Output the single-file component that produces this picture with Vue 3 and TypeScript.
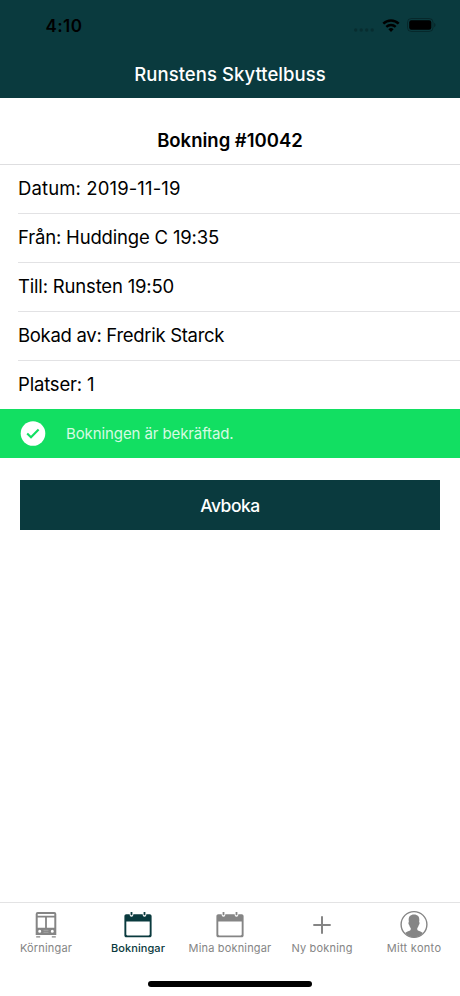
<script setup lang="ts">
interface Tab {
  id: string
  label: string
  icon: 'bus' | 'calendar' | 'plus' | 'person'
}

const details: { id: string; text: string }[] = [
  { id: 'date', text: 'Datum: 2019-11-19' },
  { id: 'from', text: 'Från: Huddinge C 19:35' },
  { id: 'to', text: 'Till: Runsten 19:50' },
  { id: 'by', text: 'Bokad av: Fredrik Starck' },
  { id: 'seats', text: 'Platser: 1' },
]

const tabs: Tab[] = [
  { id: 'runs', label: 'Körningar', icon: 'bus' },
  { id: 'bookings', label: 'Bokningar', icon: 'calendar' },
  { id: 'mine', label: 'Mina bokningar', icon: 'calendar' },
  { id: 'new', label: 'Ny bokning', icon: 'plus' },
  { id: 'account', label: 'Mitt konto', icon: 'person' },
]

const activeTab = 'bookings'
</script>

<template>
  <div class="screen">
    <header class="header">
      <div class="status">
        <span class="time">4:10</span>
        <div class="indicators">
          <svg class="dots" width="21" height="4" viewBox="0 0 21 4">
            <circle v-for="n in 4" :key="n" :cx="n * 5.5 - 3.8" cy="2" r="1.7" />
          </svg>
          <svg width="18" height="13" viewBox="0 0 18 13">
            <path d="M1.3 4.7a11 11 0 0 1 15.400 0" fill="none" stroke="#000" stroke-width="2.5" />
            <path d="M4.3 7.9a6.8 6.8 0 0 1 9.400 0" fill="none" stroke="#000" stroke-width="2.3" />
            <path d="M6.4 10.2a3.9 3.9 0 0 1 5.200 0L9 12.9z" />
          </svg>
          <svg width="29" height="14" viewBox="0 0 29 14">
            <rect x=".5" y=".5" width="25.5" height="13" rx="3.8" fill="none" stroke="#000" stroke-opacity=".3" />
            <rect x="2.2" y="2.2" width="22.1" height="9.6" rx="2.2" />
            <path d="M27.2 4.8c1.8.8 1.8 3.600 0 4.400z" opacity=".35" />
          </svg>
        </div>
      </div>
      <div class="nav-title"><span>Runstens Skyttelbuss</span></div>
    </header>

    <main class="content">
      <h1 class="title"><span>Bokning #10042</span></h1>
      <ul class="details">
        <li v-for="row in details" :key="row.id" :class="row.id">{{ row.text }}</li>
      </ul>
      <div class="notice">
        <svg width="26" height="26" viewBox="0 0 26 26">
          <circle cx="13" cy="12.5" r="12.3" fill="#fff" />
          <path d="M7.2 12.600l3.800 3.700 7.600-7.900" fill="none" stroke="#12df62" stroke-width="2.1" />
        </svg>
        <span>Bokningen är bekräftad.</span>
      </div>
      <button class="cancel" type="button"><span>Avboka</span></button>
    </main>

    <nav class="tabs">
      <a v-for="tab in tabs" :key="tab.id" class="tab" :class="[tab.id, { active: tab.id === activeTab }]">
        <svg width="30" height="30" viewBox="0 0 30 30">
          <g v-if="tab.icon === 'bus'">
            <path
              fill-rule="evenodd"
              d="M6.700 2h16.600a2 2 0 0 1 2 2v21H4.700V4a2 2 0 0 1 2-2zM6.700 3.900v1.900h16.600V3.900zM6.700 7.500v10.200h7.400V7.500zM15.900 7.500v10.200h7.400V7.500zM8.700 19.700a1.500 1.500 0 1 0 0 3 1.500 1.500 0 0 0 0-3zM21.300 19.700a1.500 1.500 0 1 0 0 3 1.500 1.500 0 0 0 0-3z"
            />
            <path d="M12.500 20.300h5M12.500 22.300h5" fill="none" stroke="#fff" stroke-width=".6" opacity=".45" />
            <path d="M5.200 26.200h4v1.300h-4zM20.800 26.200h4v1.300h-4z" />
          </g>
          <g v-else-if="tab.icon === 'calendar'">
            <path
              fill-rule="evenodd"
              d="M3.300 4.200h3.400v.8a1.800 1.800 0 0 0 3.600 0v-.8h9.400v.8a1.800 1.800 0 0 0 3.600 0v-.8h3.400c1.100 0 1.900.8 1.900 1.900v19.300c0 1.100-.8 1.900-1.900 1.900H3.300c-1.100 0-1.900-.8-1.900-1.900V6.100c0-1.100.8-1.900 1.900-1.900zM3.300 11.500v12.800c0 .7.4 1.100 1.100 1.100h21.200c.7 0 1.100-.4 1.100-1.100V11.500z"
            />
            <path d="M7.600 2h1.800v3.300H7.600zM20.600 2h1.800v3.300h-1.800z" />
          </g>
          <path v-else-if="tab.icon === 'plus'" d="M14 6.300h2v7.700h7.700v2H16v7.700h-2V16H6.300v-2H14z" />
          <g v-else>
            <circle cx="15" cy="14.500" r="12.900" fill="none" stroke="currentColor" stroke-width="1.400" />
            <path
              d="M15 4.500c3.700 0 5.500 2.200 5.300 5.600 0 .7-.1 1.300-.2 1.900.8.4.6 2.200-.3 2.900-.4 1.400-.8 2.300-1.500 3-.2 1.300 0 2.100.6 2.500 1.500.9 3.600 1.200 5.100 2.500A12.900 12.900 0 0 1 15 27.400 12.900 12.900 0 0 1 6 22.900c1.500-1.300 3.600-1.600 5.100-2.500.6-.4.8-1.200.6-2.500-.7-.7-1.100-1.600-1.500-3-.9-.7-1.100-2.500-.3-2.900-.1-.6-.2-1.200-.2-1.900-.2-3.400 1.600-5.600 5.300-5.600z"
            />
          </g>
        </svg>
        <span class="label">{{ tab.label }}</span>
      </a>
    </nav>
    <div class="home"><div class="home-bar"></div></div>
  </div>
</template>

<style>
body {
  background: #fff;
}
</style>

<style scoped>
.screen {
  box-sizing: border-box;
  display: flex;
  flex-direction: column;
  width: 460px;
  height: 996px;
  overflow: hidden;
  background: #fff;
  color: #000;
  font-family: Inter, "Liberation Sans", sans-serif;
}
.header {
  height: 98px;
  background: #0a3a3e;
}
.status {
  display: flex;
  justify-content: space-between;
  align-items: center;
  height: 50px;
  padding: 0 24px 0 45.5px;
}
.time {
  font-size: 17px;
  font-weight: 600;
  line-height: 20px;
  letter-spacing: 0.4px;
  padding-top: 1px;
}
.indicators {
  display: flex;
  align-items: center;
  gap: 7px;
}
.dots {
  fill: #000;
  opacity: 0.22;
  padding-top: 9px;
}
.nav-title {
  display: flex;
  justify-content: center;
  align-items: center;
  height: 48px;
  color: #fff;
  font-size: 18.5px;
  font-weight: 550;
  letter-spacing: 0.05px;
}
.content {
  flex: 1;
}
.title {
  display: flex;
  justify-content: center;
  height: 66px;
  margin: 0;
  padding-top: 30px;
  box-sizing: border-box;
  font-size: 18.5px;
  line-height: 24px;
  font-weight: 600;
  letter-spacing: 0;
}
.details {
  margin: 0;
  padding: 0 0 0 18px;
  list-style: none;
  border-top: 1px solid #dedee0;
}
.details li {
  box-sizing: border-box;
  height: 49px;
  border-bottom: 1px solid #e2e2e4;
  font-size: 18.5px;
  line-height: 47px;
  letter-spacing: -0.18px;
  white-space: nowrap;
}
.details li.date {
  letter-spacing: 0.12px;
}
.details li.by {
  letter-spacing: -0.3px;
}
.details li:last-child {
  height: 48px;
  border-bottom: 0;
}
.notice {
  display: flex;
  align-items: center;
  gap: 20px;
  height: 49px;
  padding-left: 20px;
  background: #12df62;
  color: #d5fbe3;
  font-size: 15px;
  letter-spacing: -0.1px;
}
.cancel {
  display: block;
  width: 420px;
  height: 50px;
  margin: 22px 20px 0;
  padding: 0;
  border: 0;
  background: #0a3a3e;
  color: #fff;
  font: 500 17.5px Inter, "Liberation Sans", sans-serif;
  letter-spacing: -0.5px;
}
.tabs {
  box-sizing: border-box;
  display: grid;
  grid-template-columns: repeat(5, 1fr);
  height: 60px;
  border-top: 1px solid #e3e3e4;
}
.tab {
  display: flex;
  flex-direction: column;
  align-items: center;
  padding-top: 7px;
  color: #858585;
}
.tab svg {
  fill: currentColor;
}
.tab.active {
  color: #0a3a3e;
}
.label {
  margin-top: 1px;
  font-size: 11px;
  line-height: 14px;
  letter-spacing: 0.17px;
  white-space: nowrap;
}
.account .label {
  letter-spacing: 0.3px;
}
.active .label {
  font-weight: 500;
  letter-spacing: 0.08px;
}
.home {
  display: flex;
  justify-content: center;
  height: 34px;
  padding-top: 19px;
  box-sizing: border-box;
}
.home-bar {
  width: 164px;
  height: 6px;
  border-radius: 3px;
  background: #000;
}
</style>
